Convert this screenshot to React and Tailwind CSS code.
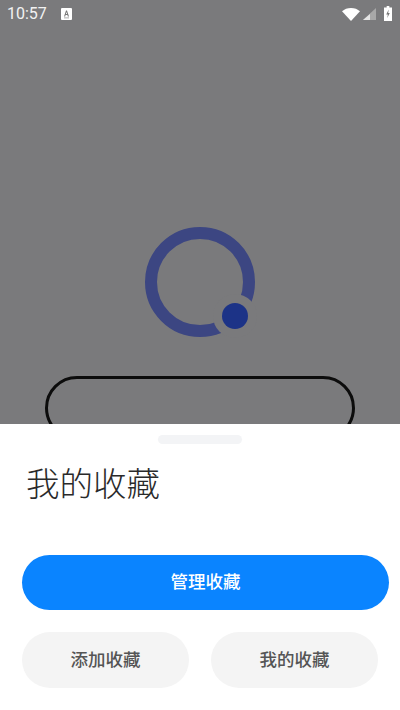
const Ring = () => (
	<svg width="116" height="116" viewBox="0 0 116 116" className="block">
		<circle cx="58" cy="58" r="49" fill="none" stroke="#3c4682" strokeWidth="12" />
		<circle cx="93" cy="92" r="22" fill="#7a7a7c" />
		<circle cx="93" cy="92" r="13" fill="#1c3387" />
	</svg>
);

const StatusBar = () => (
	<div className="flex h-7 items-center justify-between pl-[7px] pr-[8px] text-white">
		<div className="flex items-center">
			<span className="text-[16px] leading-none text-[#f2f2f2] font-['Roboto',sans-serif]">10:57</span>
			<svg width="11" height="12" viewBox="0 0 11 12" className="ml-[14px]">
				<rect width="11" height="12" rx="1" fill="#fff" />
				<path d="M3 8.500 5 2.500h1l2 6H6.800L6.400 7H4.600l-.4 1.500zM4.900 6h1.200L5.500 4z" fill="#777" />
				<rect x="3" y="9.500" width="5" height="0.800" fill="#999" />
			</svg>
		</div>
		<div className="flex items-center">
			<svg width="18" height="13" viewBox="0 0 19 14" preserveAspectRatio="none">
				<path d="M0 3.500C2.500 1.300 5.800 0 9.500 0S16.500 1.300 19 3.500L9.500 14z" fill="#fff" />
			</svg>
			<svg width="13" height="12" viewBox="0 0 13 13" preserveAspectRatio="none" className="ml-[3px]">
				<path d="M13 0v13H0z" fill="#a8a8a8" />
				<path d="M7 6.500V13H0z" fill="#e4e4e4" />
			</svg>
			<svg width="8" height="15" viewBox="0 0 9 15" preserveAspectRatio="none" className="ml-[8px] -mt-[2px]">
				<path d="M3 0h3v1.500h3V15H0V1.500h3z" fill="#fff" />
				<path d="M5.300 3.500 2.500 8.500h1.800L3.700 12l2.800-5H4.700z" fill="#777" />
			</svg>
		</div>
	</div>
);

const App = () => {
	return (
		<div className="flex h-[710px] w-[400px] flex-col overflow-hidden bg-white font-['Noto_Sans_CJK_SC',sans-serif]">
			{/* Dimmed page behind the sheet */}
			<div className="h-[424px] shrink-0 overflow-hidden bg-[#7a7a7c]">
				<StatusBar />
				<div className="mt-[196px] flex justify-center">
					<Ring />
				</div>
				<div className="mx-[45px] mt-[36px] h-[64px] rounded-[32px] border-[3px] border-[#0c0c0c]" />
			</div>

			{/* Bottom sheet */}
			<div className="flex-1 px-[22px]">
				<div className="mx-auto mt-[11px] h-[9px] w-[84px] rounded-full bg-[#f3f4f6]" />
				<h2 className="mt-[15px] pl-[4px] text-[33.500px] font-light leading-[46px] text-[#2a2a2a]">我的收藏</h2>
				<button className="mt-[50px] flex h-[55px] w-[367px] items-center justify-center rounded-full bg-[#0a84ff] pb-[2px] text-[17.500px] font-medium text-white">
					管理收藏
				</button>
				<div className="mt-[22px] flex gap-[22px]">
					<button className="h-[56px] w-[167px] rounded-full bg-[#f4f4f4] pb-[2px] text-[17.500px] font-medium text-[#555]">
						添加收藏
					</button>
					<button className="h-[56px] w-[167px] rounded-full bg-[#f4f4f4] pb-[2px] text-[17.500px] font-medium text-[#555]">
						我的收藏
					</button>
				</div>
			</div>
		</div>
	);
};

export default App;
